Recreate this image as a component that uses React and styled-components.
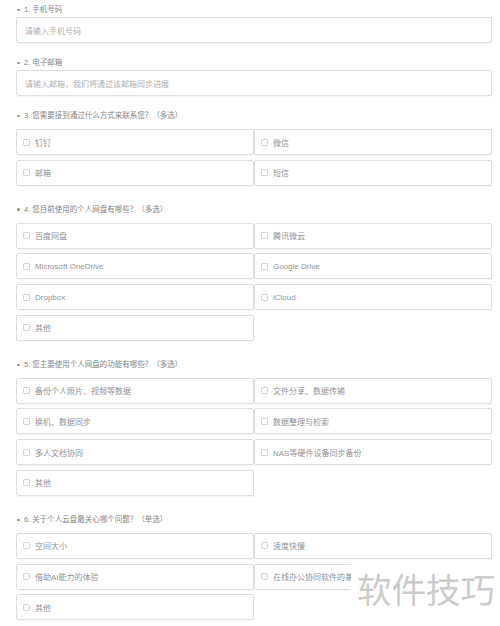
import React from "react";
import styled, { createGlobalStyle } from "styled-components";

const Global = createGlobalStyle`
  html, body { margin: 0; padding: 0; background: #fff; }
  body { font-family: "Liberation Sans", "Noto Sans CJK SC", sans-serif; }
  * { box-sizing: border-box; }
`;

const Page = styled.div`
  position: relative;
  width: 500px;
  height: 626px;
  overflow: hidden;
  padding: 5px 8px 0 16px;
`;

const Section = styled.section`
  display: flex;
  flex-direction: column;
  padding-bottom: ${(p) => (p.$options ? 19 : 15)}px;
`;

const Label = styled.div`
  display: flex;
  align-items: center;
  height: 10px;
  font-size: 7.5px;
  line-height: 10px;
  color: #858585;
  padding-left: 1px;
  white-space: nowrap;
`;

const Dot = styled.span`
  width: 2.5px;
  height: 2.5px;
  border-radius: 50%;
  background: #999;
  margin-right: 4.5px;
`;

const Input = styled.div`
  margin-top: 2px;
  height: 26px;
  border: 1px solid #dedede;
  border-radius: 2px;
  display: flex;
  align-items: center;
  padding-left: 8px;
  font-size: 8px;
  color: #b0b0b0;
  box-shadow: 0 1px 1px rgba(0, 0, 0, 0.04);
`;

const Grid = styled.div`
  margin-top: 8px;
  display: grid;
  grid-template-columns: 238px 238px;
  row-gap: 4.7px;
`;

const Option = styled.div`
  height: 26px;
  border: 1px solid #dedede;
  border-radius: 2px;
  display: flex;
  align-items: center;
  padding-left: 6px;
  gap: 5px;
  font-size: 8px;
  color: #939393;
  white-space: nowrap;
  overflow: hidden;
  box-shadow: 0 1px 1px rgba(0, 0, 0, 0.04);
`;

const Box = styled.span`
  flex: none;
  width: 7px;
  height: 7px;
  border: 1px solid #d6d6d6;
  border-radius: ${(p) => (p.$radio ? 2 : 1)}px;
  background: #fff;
`;

const Watermark = styled.div`
  position: absolute;
  left: 351px;
  top: 560px;
  width: 149px;
  height: 56px;
  background: #fff;
  display: flex;
  align-items: center;
  padding-left: 6px;
  font-family: "Noto Sans CJK SC", sans-serif;
  font-size: 34.5px;
  color: #cbcbcb;
  white-space: nowrap;
`;

const questions = [
  { type: "input", label: "1. 手机号码", placeholder: "请输入手机号码" },
  { type: "input", label: "2. 电子邮箱", placeholder: "请输入邮箱，我们将通过该邮箱同步进展" },
  {
    type: "check",
    label: "3. 您需要接到通过什么方式来联系您？（多选）",
    options: ["钉钉", "微信", "邮箱", "短信"],
  },
  {
    type: "check",
    label: "4. 您目前使用的个人网盘有哪些？（多选）",
    options: ["百度网盘", "腾讯微云", "Microsoft OneDrive", "Google Drive", "Dropbox", "iCloud", "其他"],
  },
  {
    type: "check",
    label: "5. 您主要使用个人网盘的功能有哪些？（多选）",
    options: [
      "备份个人照片、视频等数据",
      "文件分享、数据传输",
      "换机、数据同步",
      "数据整理与检索",
      "多人文档协同",
      "NAS等硬件设备同步备份",
      "其他",
    ],
  },
  {
    type: "radio",
    label: "6. 关于个人云盘最关心哪个问题？（单选）",
    options: ["空间大小", "速度快慢", "借助AI能力的体验", "在线办公协同软件的兼容性", "其他"],
  },
];

export default function App() {
  return (
    <>
      <Global />
      <Page>
        {questions.map((q) => (
          <Section key={q.label} $options={q.type !== "input"}>
            <Label>
              <Dot />
              {q.label}
            </Label>
            {q.type === "input" ? (
              <Input>{q.placeholder}</Input>
            ) : (
              <Grid>
                {q.options.map((o) => (
                  <Option key={o}>
                    <Box $radio={q.type === "radio"} />
                    {o}
                  </Option>
                ))}
              </Grid>
            )}
          </Section>
        ))}
        <Watermark>软件技巧</Watermark>
      </Page>
    </>
  );
}
